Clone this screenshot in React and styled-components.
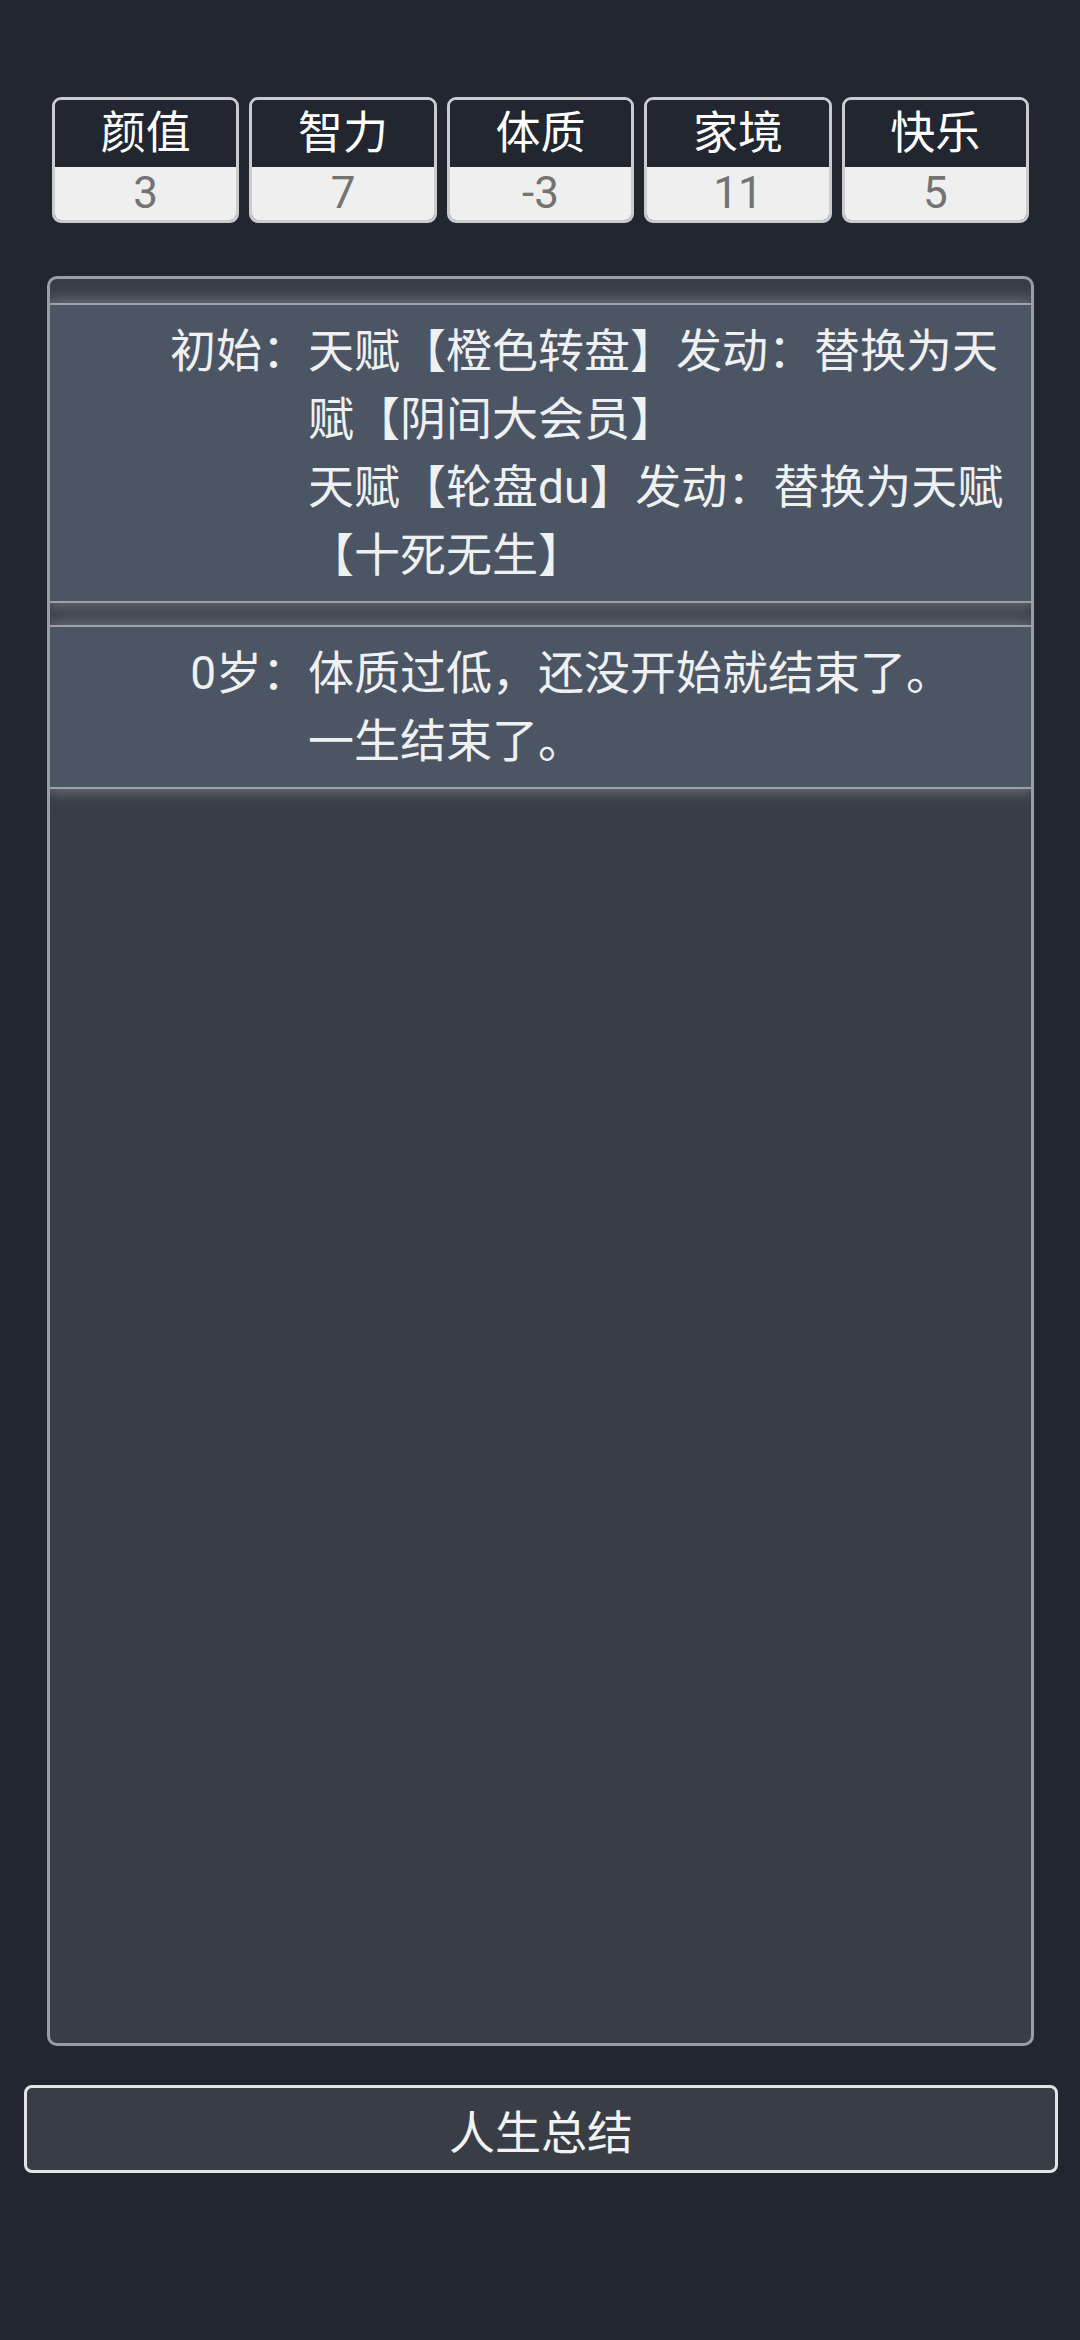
import React from 'react';
import styled, { createGlobalStyle } from 'styled-components';

const stats = [
  { label: '颜值', value: 3 },
  { label: '智力', value: 7 },
  { label: '体质', value: -3 },
  { label: '家境', value: 11 },
  { label: '快乐', value: 5 },
];

const trajectory = [
  {
    age: '初始：',
    lines: ['天赋【橙色转盘】发动：替换为天赋【阴间大会员】', '天赋【轮盘du】发动：替换为天赋【十死无生】'],
  },
  {
    age: '0岁：',
    lines: ['体质过低，还没开始就结束了。', '一生结束了。'],
  },
];

const GlobalStyle = createGlobalStyle`
  html, body {
    margin: 0;
    padding: 0;
    background: #212630;
  }

  body {
    font-family: Roboto, "Noto Sans CJK SC", sans-serif;
  }
`;

const App = () => {
  return (
    <>
      <GlobalStyle />
      <Page>
        <StatsRow>
          {stats.map(item => (
            <StatBox key={item.label}>
              <StatLabel>{item.label}</StatLabel>
              <StatValue>{item.value}</StatValue>
            </StatBox>
          ))}
        </StatsRow>

        <Trajectory>
          <TrajectoryList>
            {trajectory.map(entry => (
              <Entry key={entry.age}>
                <Age>{entry.age}</Age>
                <Events>
                  {entry.lines.map(line => (
                    <div key={line}>{line}</div>
                  ))}
                </Events>
              </Entry>
            ))}
          </TrajectoryList>
        </Trajectory>

        <SummaryButton>人生总结</SummaryButton>
      </Page>
    </>
  );
};

const Page = styled.div`
  width: 1080px;
  height: 2340px;
  box-sizing: border-box;
  padding-top: 97px;
  display: flex;
  flex-direction: column;
  background: #212630;
`;

const StatsRow = styled.div`
  display: flex;
  gap: 10px;
  padding: 0 51px 0 52px;
`;

const StatBox = styled.div`
  flex: 1;
  display: flex;
  flex-direction: column;
  border: 3px solid #c9cbce;
  border-radius: 9px;
  overflow: hidden;
`;

const StatLabel = styled.div`
  height: 67px;
  line-height: 67px;
  text-align: center;
  background: #212630;
  color: #ffffff;
  font-size: 45px;
`;

const StatValue = styled.div`
  height: 53px;
  line-height: 53px;
  text-align: center;
  background: #efefef;
  color: #737373;
  font-size: 44px;
`;

const Trajectory = styled.div`
  margin: 53px 46px 0 47px;
  height: 1770px;
  box-sizing: border-box;
  border: 3px solid #9a9da2;
  border-radius: 10px;
  background: #393d46;
  overflow: hidden;
`;

const TrajectoryList = styled.ul`
  list-style: none;
  margin: 0;
  padding: 26px 0 0;
  display: flex;
  flex-direction: column;
  gap: 26px;
`;

const Entry = styled.li`
  display: flex;
  padding: 12px 22px 12px 0;
  background: #4b5564;
  color: #eef0f2;
  font-size: 46px;
  line-height: 68px;
  box-shadow: 0 0 0 2px rgba(170, 174, 180, 0.85), 0 0 16px 3px rgba(175, 180, 188, 0.55);
`;

const Age = styled.div`
  flex: 0 0 258px;
  text-align: right;
`;

const Events = styled.div`
  flex: 1;
`;

const SummaryButton = styled.button`
  margin: 39px 22px 0 24px;
  height: 88px;
  border: 3px solid #e2e4e6;
  border-radius: 8px;
  background: #393d46;
  color: #f2f2f2;
  font-family: Roboto, "Noto Sans CJK SC", sans-serif;
  font-size: 46px;
  padding: 0;
`;

export default App;
